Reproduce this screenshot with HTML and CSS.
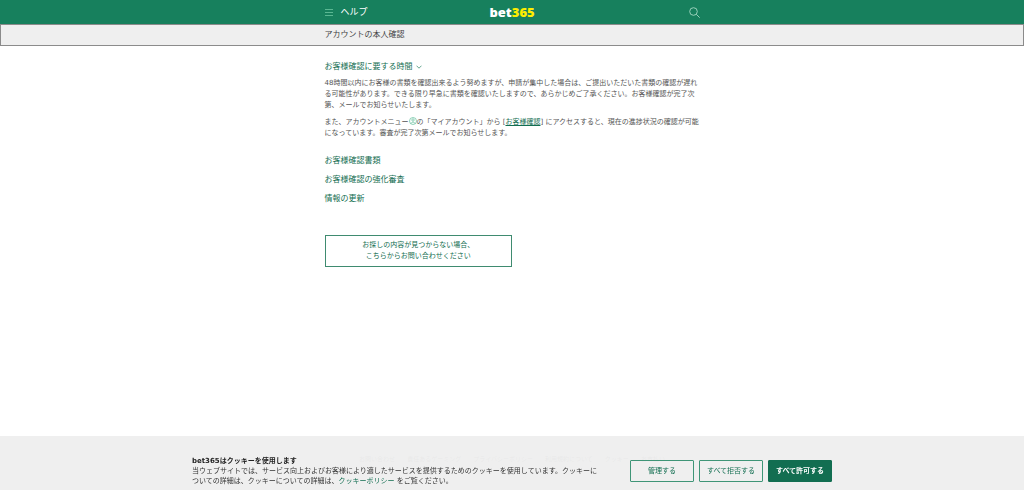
FILE: index.html
```html
<!DOCTYPE html>
<html lang="ja">
<head>
<meta charset="utf-8">
<title>ヘルプ - アカウントの本人確認</title>
<link rel="stylesheet" href="styles.css">
</head>
<body>
<header class="top-bar">
  <div class="column top-bar-inner">
    <div class="menu">
      <button class="icon-button" type="button" aria-label="メニュー">
        <svg width="8" height="7" viewBox="0 0 8 7" fill="none" stroke="#6cc5a0"><path d="M0 .5h8M0 3.5h8M0 6.5h8" stroke-width=".8"/></svg>
      </button>
      <span class="menu-title">ヘルプ</span>
    </div>
    <a class="logo" href="#">bet<span class="logo-number">365</span></a>
    <button class="icon-button search" type="button" aria-label="検索">
      <svg width="11" height="11" viewBox="0 0 11 11" fill="none" stroke="#a5d8c3" stroke-width=".9"><circle cx="4.5" cy="4.5" r="3.8"/><path d="M7.3 7.3l3.4 3.4"/></svg>
    </button>
  </div>
</header>
<div class="title-bar"><h1 class="column page-title">アカウントの本人確認</h1></div>
<main class="column content">
  <section>
    <button class="topic topic-open" type="button">お客様確認に要する時間
      <svg width="6" height="4" viewBox="0 0 6 4" fill="none" stroke="#3c8f73" stroke-width=".8"><path d="M.5.7L3 3.2 5.5.7"/></svg>
    </button>
    <p class="text">48時間以内にお客様の書類を確認出来るよう努めますが、申請が集中した場合は、ご提出いただいた書類の確認が遅れる可能性があります。できる限り早急に書類を確認いたしますので、あらかじめご了承ください。お客様確認が完了次第、メールでお知らせいたします。</p>
    <p class="text">また、アカウントメニュー<svg class="account" width="8" height="8" viewBox="0 0 8 8" fill="none" stroke="#62bd9b" stroke-width=".7"><circle cx="4" cy="4" r="3.5"/><circle cx="4" cy="3" r="1.2"/><path d="M1.7 6.4Q4 3.5 6.3 6.4"/></svg>の「マイアカウント」から [<a class="link" href="#">お客様確認</a>] にアクセスすると、現在の進捗状況の確認が可能になっています。審査が完了次第メールでお知らせします。</p>
  </section>
  <div class="topics">
    <button class="topic" type="button">お客様確認書類</button>
    <button class="topic" type="button">お客様確認の強化審査</button>
    <button class="topic" type="button">情報の更新</button>
  </div>
  <a class="contact" href="#">お探しの内容が見つからない場合、<br>こちらからお問い合わせください</a>
</main>
<footer class="footer">
  <nav class="footer-links">
    <a href="#">お問い合わせ</a>
    <a href="#">責任あるゲーミング</a>
    <a href="#">プライバシーポリシー</a>
    <a href="#">利用規約について</a>
    <a href="#">クッキー</a>
    <a href="#">お支払い</a>
  </nav>
</footer>
<aside class="cookie-bar">
  <div class="cookie-inner">
    <div class="cookie-text">
      <h2 class="cookie-title">bet365はクッキーを使用します</h2>
      <p class="cookie-copy">当ウェブサイトでは、サービス向上およびお客様により適したサービスを提供するためのクッキーを使用しています。クッキーに<br>ついての詳細は、クッキーについての詳細は、<a class="cookie-link" href="#">クッキーポリシー</a> をご覧ください。</p>
    </div>
    <div class="cookie-actions">
      <button class="choice" type="button">管理する</button>
      <button class="choice" type="button">すべて拒否する</button>
      <button class="choice choice-primary" type="button">すべて許可する</button>
    </div>
  </div>
</aside>
</body>
</html>
```
FILE: styles.css
```css
* { box-sizing: border-box; }
body {
  margin: 0;
  min-height: 100vh;
  display: flex;
  flex-direction: column;
  background: #fff;
  color: #555;
  font: 7px/11px "DejaVu Sans", "Noto Sans CJK JP", sans-serif;
}
h1, h2, p { margin: 0; }
button { padding: 0; border: 0; background: none; font: inherit; color: inherit; cursor: pointer; }
svg { display: block; }
.column { width: 100%; max-width: 375px; margin: 0 auto; }
.top-bar { background: #17805d; color: #fff; }
.top-bar-inner { height: 24px; display: grid; grid-template-columns: 1fr auto 1fr; align-items: center; }
.menu { display: flex; align-items: center; gap: 8px; }
.menu-title { font-size: 9px; }
.logo { color: #fff; font: 800 13px/16px "Open Sans", sans-serif; text-decoration: none; }
.logo-number { color: #ffed00; }
.search { justify-self: end; }
.title-bar { border: 1px solid #8b8b8b; background: #efefef; }
.page-title { font-size: 8px; font-weight: 400; line-height: 20px; color: #444; }
.content { flex: 1; padding-top: 15px; }
.topic { display: flex; align-items: center; gap: 3px; font-size: 8px; line-height: 11px; color: #126e51; }
.text { margin-top: 6px; }
.account { display: inline-block; vertical-align: -1px; }
.link { color: #126e51; }
.topics { display: flex; flex-direction: column; gap: 8px; margin-top: 16px; }
.contact {
  display: block;
  width: 50%;
  margin-top: 31px;
  padding: 4px;
  border: 1px solid #3f8b70;
  color: #126e51;
  text-align: center;
  text-decoration: none;
}
.footer { padding: 17px 24px 26px; background: #fff; }
.footer-links { display: flex; justify-content: center; gap: 12px; font-size: 6px; }
.footer-links a { color: #777; text-decoration: none; }
.cookie-bar {
  position: fixed;
  right: 0;
  bottom: 0;
  left: 0;
  padding: 20px 24px 4px;
  background: rgba(238, 238, 238, .95);
  color: #333;
}
.cookie-inner { display: flex; justify-content: space-between; gap: 8px; max-width: 640px; margin: 0 auto; }
.cookie-title { font-size: 7px; line-height: 10px; color: #222; }
.cookie-copy { line-height: 10px; }
.cookie-link { color: #126e51; text-decoration: none; }
.cookie-actions { display: flex; gap: 5px; padding-top: 4px; }
.choice { width: 64px; height: 22px; border: 1px solid #3f9577; border-radius: 1px; color: #126e51; }
.choice-primary { border-color: #126e51; background: #126e51; color: #fff; font-weight: 700; }
```
